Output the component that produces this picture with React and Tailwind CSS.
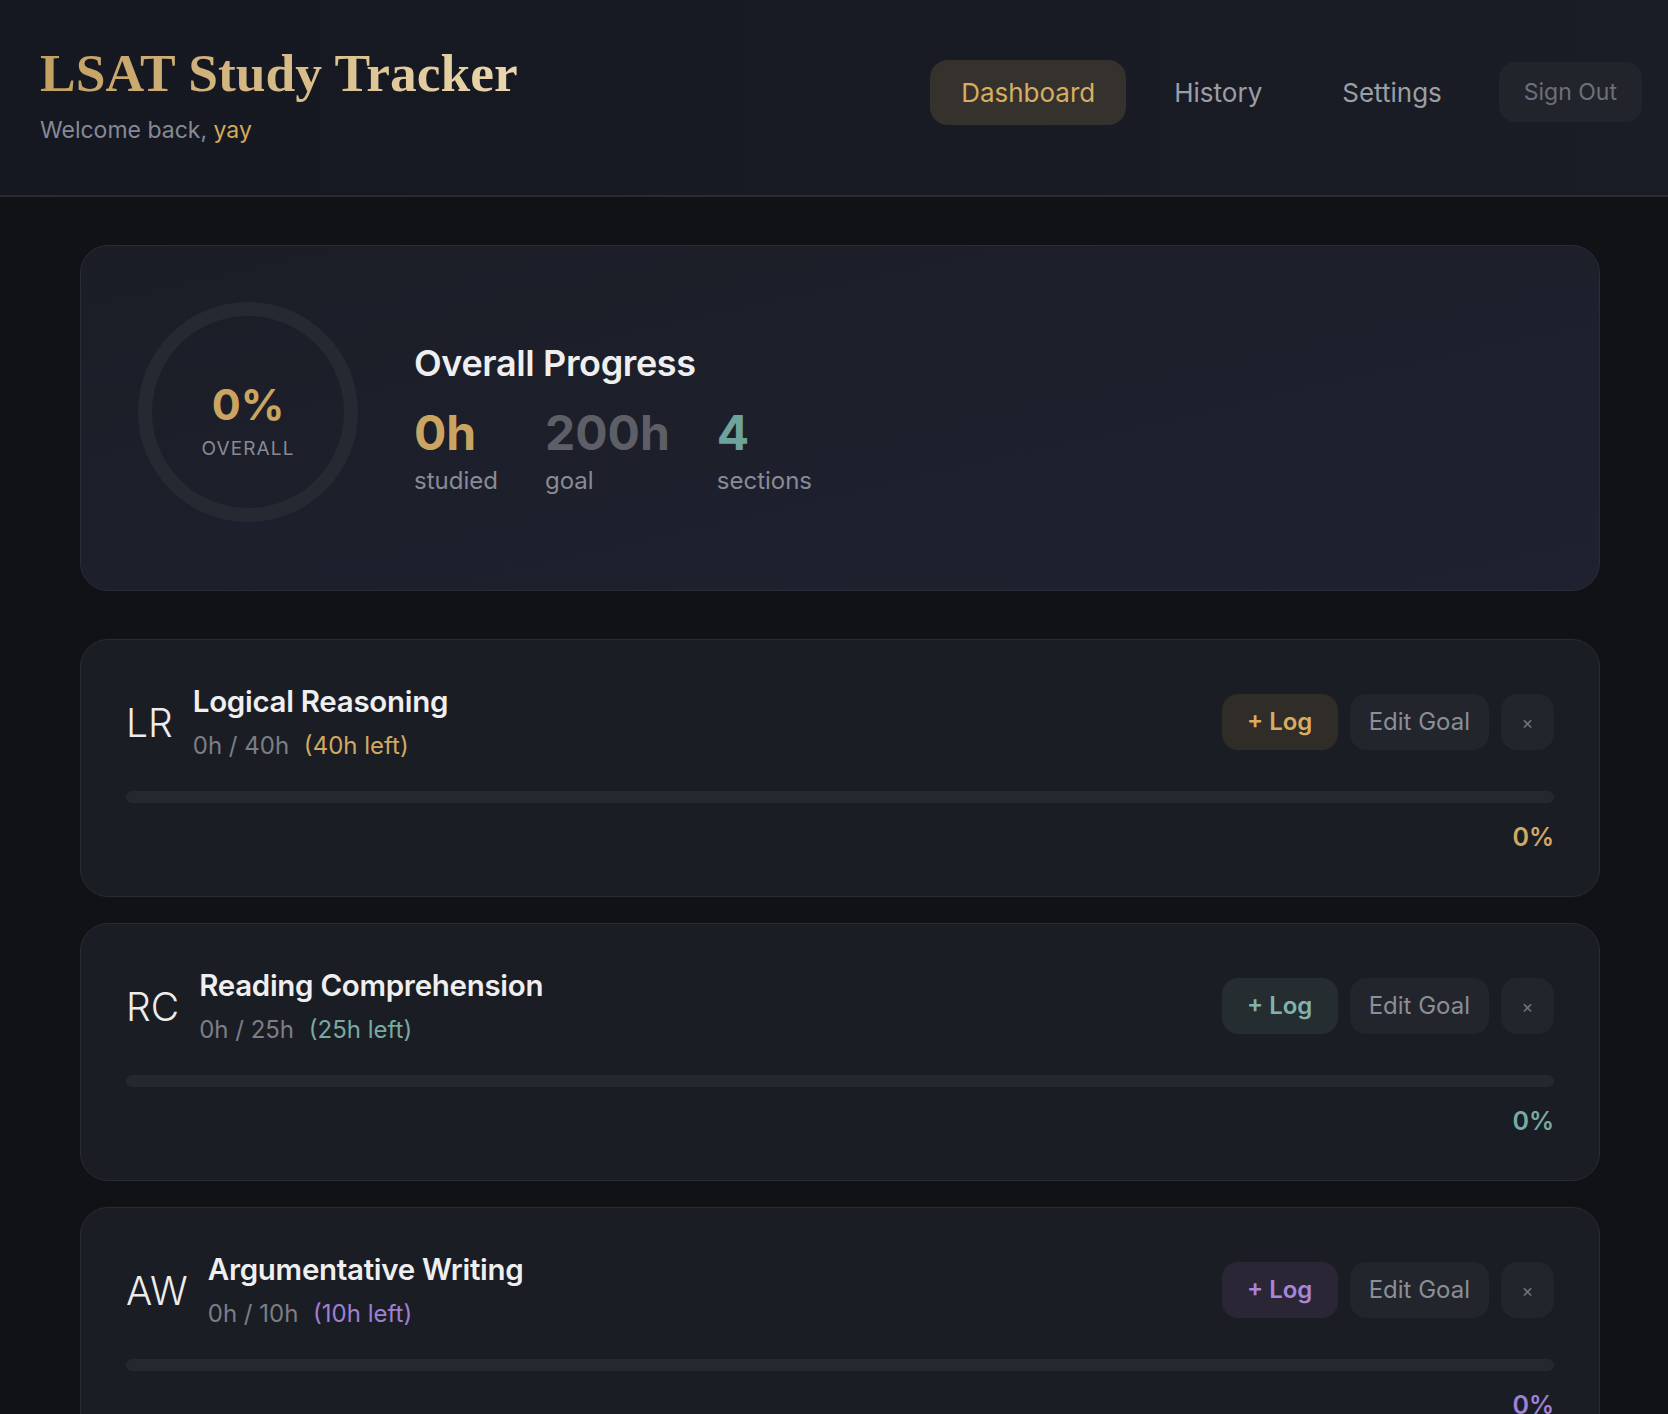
import React from "react";

const sections = [
  { abbr: "LR", name: "Logical Reasoning", goal: 40, tone: "gold" },
  { abbr: "RC", name: "Reading Comprehension", goal: 25, tone: "teal" },
  { abbr: "AW", name: "Argumentative Writing", goal: 10, tone: "purple" },
  { abbr: "PT", name: "Practice Tests", goal: 125, tone: "gold" },
];

const tones = {
  gold: { text: "text-[#d2a862]", btn: "bg-[#302c27] text-[#d6ad63]" },
  teal: { text: "text-[#78aaa2]", btn: "bg-[#252d31] text-[#80b3ab]" },
  purple: { text: "text-[#9f80d4]", btn: "bg-[#2a2636] text-[#a885da]" },
};

function SectionCard({ s }) {
  const t = tones[s.tone];
  return (
    <div className="rounded-[28px] border border-[#2a2c33] bg-[#1b1d24] px-[45px] pt-[42px] pb-[43px]">
      <div className="flex items-center justify-between">
        <div className="flex items-center gap-[20px]">
          <div className="text-[39px] font-light leading-none text-[#ececec]">{s.abbr}</div>
          <div className="flex flex-col gap-[10px]">
            <div className="text-[29.5px] font-semibold leading-[38px] tracking-[-0.01em] text-[#efefef]">{s.name}</div>
            <div className="text-[24px] leading-[32px] text-[#7b7e86]">
              0h / {s.goal}h <span className={`ml-[8px] ${t.text}`}>({s.goal}h left)</span>
            </div>
          </div>
        </div>
        <div className="flex items-center gap-[12px]">
          <button className={`h-[56px] w-[116px] rounded-[16px] text-[24px] font-semibold ${t.btn}`}>+ Log</button>
          <button className="h-[56px] rounded-[16px] bg-[#23252d] px-[19px] text-[24px] text-[#8a8e97]">Edit Goal</button>
          <button className="h-[56px] w-[53px] rounded-[16px] bg-[#23252d] text-[18px] text-[#70747d]">×</button>
        </div>
      </div>
      <div className="mt-[29px] h-[12px] w-full rounded-full bg-[#262830]"></div>
      <div className={`mt-[18px] text-right text-[25px] font-semibold leading-[32px] ${t.text}`}>0%</div>
    </div>
  );
}

export default function App() {
  return (
    <div
      className="min-h-screen bg-[#111216]"
      style={{ fontFamily: 'Inter, "Noto Sans", "Liberation Sans", sans-serif' }}
    >
      <header className="flex h-[197px] items-center justify-between border-b-2 border-[#2b2c31] bg-gradient-to-r from-[#151821] to-[#1b1d26] pb-[7px] pl-[40px] pr-[26px]">
        <div>
          <h1
            className="bg-gradient-to-r from-[#c39f60] to-[#ead7ae] bg-clip-text text-[53.5px] font-bold leading-[62px] text-transparent"
            style={{ fontFamily: '"Liberation Serif", "DejaVu Serif", serif' }}
          >
            LSAT Study Tracker
          </h1>
          <p className="mt-[10px] text-[23px] leading-[32px] text-[#868a94]">
            Welcome back, <span className="text-[#d4a95a]">yay</span>
          </p>
        </div>
        <nav className="mb-[4px] flex items-center gap-[16px]">
          <button className="h-[65px] rounded-[18px] bg-[#35322e] px-[31px] text-[26px] text-[#d6ad63]">Dashboard</button>
          <button className="h-[65px] rounded-[18px] px-[32px] text-[26px] text-[#9a9ea7]">History</button>
          <button className="h-[65px] rounded-[18px] px-[32px] text-[26px] text-[#9a9ea7]">Settings</button>
          <button className="ml-[9px] h-[60px] rounded-[16px] bg-[#22242c] px-[25px] text-[23px] text-[#6c7079]">Sign Out</button>
        </nav>
      </header>

      <main className="flex flex-col pb-[60px] pl-[80px] pr-[68px] pt-[48px]">
        <div className="flex items-center gap-[56px] rounded-[28px] border border-[#2a2c36] bg-gradient-to-br from-[#1b1d26] to-[#1f2131] pb-[68px] pl-[57px] pt-[56px]">
          <div className="relative h-[220px] w-[220px] shrink-0">
            <svg width="220" height="220" viewBox="0 0 220 220" className="absolute inset-0">
              <circle cx="110" cy="110" r="103" fill="none" stroke="#272932" strokeWidth="14" />
            </svg>
            <div className="absolute inset-0 flex flex-col items-center justify-center pt-[16px]">
              <div className="text-[43px] font-bold leading-[48px] text-[#cba462]">0%</div>
              <div className="mt-[9px] text-[19px] leading-[24px] tracking-[0.06em] text-[#878b95]">OVERALL</div>
            </div>
          </div>
          <div className="mt-[16px]">
            <div className="text-[36px] font-semibold leading-[41px] tracking-[-0.01em] text-[#efefef]">Overall Progress</div>
            <div className="mt-[20px] flex gap-[47px]">
              <div>
                <div className="text-[48px] font-bold leading-[58px] text-[#cba462]">0h</div>
                <div className="mt-[3px] text-[24px] leading-[32px] text-[#878b95]">studied</div>
              </div>
              <div>
                <div className="text-[48px] font-bold leading-[58px] text-[#5e5f66]">200h</div>
                <div className="mt-[3px] text-[24px] leading-[32px] text-[#878b95]">goal</div>
              </div>
              <div>
                <div className="text-[48px] font-bold leading-[58px] text-[#6ea39c]">4</div>
                <div className="mt-[3px] text-[24px] leading-[32px] text-[#878b95]">sections</div>
              </div>
            </div>
          </div>
        </div>

        <div className="mt-[48px] flex flex-col gap-[26px]">
          {sections.map((s) => (
            <SectionCard key={s.abbr} s={s} />
          ))}
        </div>
      </main>
    </div>
  );
}
